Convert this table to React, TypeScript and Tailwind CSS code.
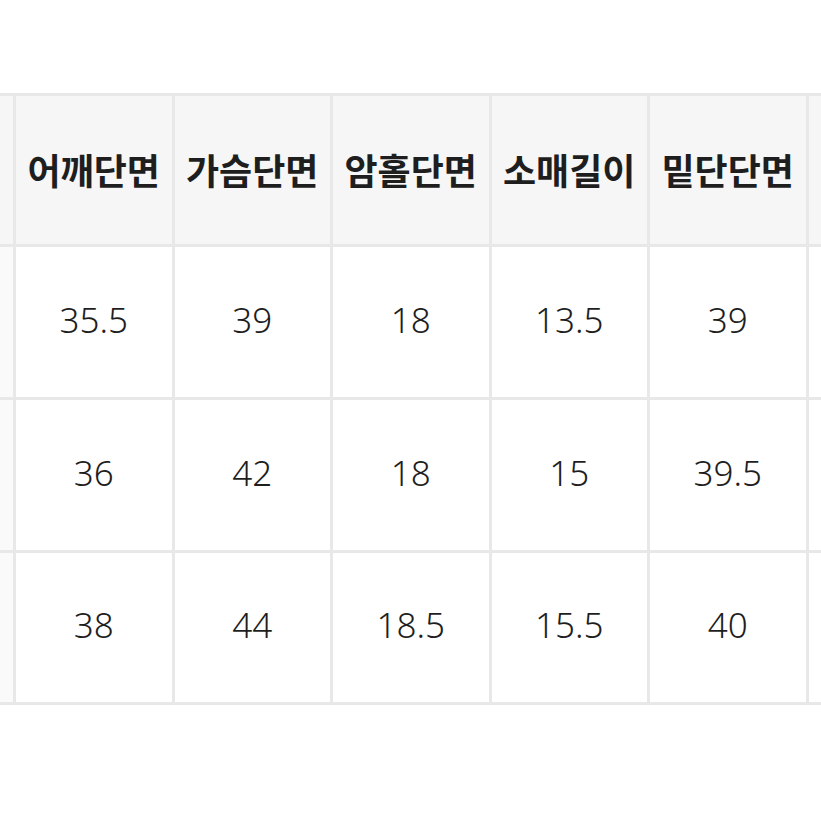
import React from "react";

const headers = ["어깨단면", "가슴단면", "암홀단면", "소매길이", "밑단단면"];
const rows = [
  ["35.5", "39", "18", "13.5", "39"],
  ["36", "42", "18", "15", "39.5"],
  ["38", "44", "18.5", "15.5", "40"],
];

export default function App() {
  return (
    <div
      className="w-[821px] h-[821px] bg-white overflow-hidden"
      style={{ fontFamily: '"Noto Sans CJK KR", "Noto Sans", sans-serif' }}
    >
      <div className="pt-[93px]">
        <div className="grid grid-cols-[13px_155.5px_155.5px_155.5px_155.5px_155.5px_40px] grid-rows-[148px_150px_150px_149px] gap-[3px] bg-[#e8e8e8] py-[3px] w-[860px]">
          <div className="bg-[#f6f6f6]" />
          {headers.map((h) => (
            <div
              key={h}
              className="bg-[#f6f6f6] flex items-center justify-center pb-[3px] text-[36px] font-bold text-[#1e1e1e]"
            >
              {h}
            </div>
          ))}
          <div className="bg-[#f6f6f6]" />
          {rows.map((r, i) => (
            <React.Fragment key={i}>
              <div className="bg-[#fafafa]" />
              {r.map((v, j) => (
                <div
                  key={j}
                  className="bg-white flex items-center justify-center pb-[4px] text-[35px] font-light text-[#1e1e1e]"
                  style={{ fontFamily: '"Noto Sans", "Open Sans", sans-serif' }}
                >
                  {v}
                </div>
              ))}
              <div className="bg-white" />
            </React.Fragment>
          ))}
        </div>
      </div>
    </div>
  );
}
